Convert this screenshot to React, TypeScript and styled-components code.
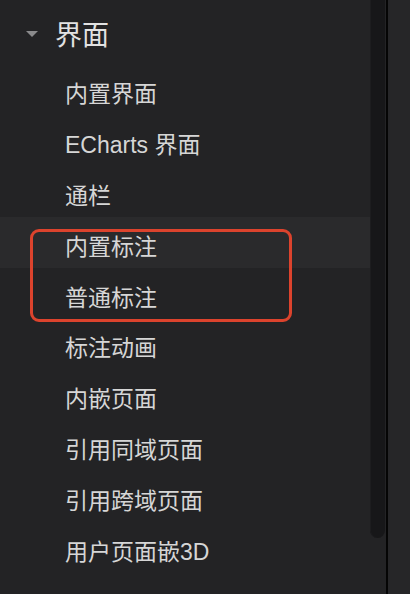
import React from 'react';
import styled, { createGlobalStyle } from 'styled-components';

const GlobalStyle = createGlobalStyle`
  html, body {
    margin: 0;
    padding: 0;
    background: #232325;
    overflow: hidden;
  }
  body {
    font-family: "Liberation Sans", "Noto Sans CJK SC", sans-serif;
  }
  * {
    box-sizing: border-box;
  }
`;

const Layout = styled.div`
  display: flex;
  width: 410px;
  height: 594px;
  overflow: hidden;
`;

const Sidebar = styled.div`
  position: relative;
  width: 386px;
  height: 594px;
  background: #232325;
  overflow: hidden;
`;

const Divider = styled.div`
  width: 2px;
  background: #050505;
`;

const RightPanel = styled.div`
  flex: 1;
  background: #262628;
`;

const Thumb = styled.div`
  position: absolute;
  top: -20px;
  right: 1px;
  width: 15px;
  height: 558px;
  border-radius: 0 0 8px 8px;
  background: #171719;
  box-shadow: inset 1px 0 0 #1d1d1f;
`;

const GroupHeader = styled.div`
  display: flex;
  align-items: center;
  height: 65px;
  padding: 2px 0 0 26px;
  color: #e2e2e2;
  font-size: 27px;
`;

const Caret = styled.span`
  width: 0;
  height: 0;
  margin-right: 17px;
  border-left: 6px solid transparent;
  border-right: 6px solid transparent;
  border-top: 6px solid #8a8a8c;
`;

const Item = styled.div<{ active?: boolean }>`
  display: flex;
  align-items: center;
  height: 50.8px;
  padding: 4px 0 0 65px;
  margin-right: 16px;
  color: #d6d6d6;
  font-size: 23px;
  background: ${props => props.active ? '#2a2a2c' : 'transparent'};
`;

const Highlight = styled.div`
  position: absolute;
  left: 30px;
  top: 229px;
  width: 262px;
  height: 93px;
  border: 3px solid #dc432d;
  border-radius: 9px;
`;

const ITEMS = ['内置界面', 'ECharts 界面', '通栏', '内置标注', '普通标注', '标注动画', '内嵌页面', '引用同域页面', '引用跨域页面', '用户页面嵌3D'];

const App = () => {
    return (
        <Layout>
            <GlobalStyle/>
            <Sidebar>
                <GroupHeader><Caret/>界面</GroupHeader>
                {ITEMS.map(name => (
                    <Item key={name} active={name === '内置标注'}>{name}</Item>
                ))}
                <GroupHeader><Caret/>控件</GroupHeader>
                <Thumb/>
                <Highlight/>
            </Sidebar>
            <Divider/>
            <RightPanel/>
        </Layout>
    );
};

export default App;
